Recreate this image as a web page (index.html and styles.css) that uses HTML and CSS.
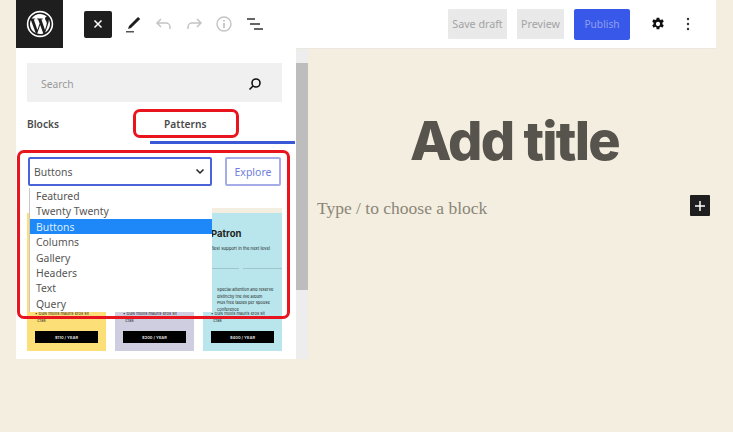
FILE: index.html
```html
<!DOCTYPE html>
<html lang="en">
<head>
<meta charset="utf-8">
<title>Add title</title>
<link rel="stylesheet" href="styles.css">
</head>
<body>
<div class="app">
  <header class="topbar">
    <div class="logo">
      <svg width="30" height="30" viewBox="0 0 30 30"><circle cx="15" cy="15" r="12.400" fill="none" stroke="#fff" stroke-width="1.600"/><path fill="#fff" d="M5 15c0 4 2.300 7.400 5.700 9L5.900 11c-.6 1.200-.9 2.600-.9 4zm16.800-.5c0-1.200-.5-2.100-.8-2.700-.5-.8-1-1.500-1-2.300 0-.9.700-1.800 1.700-1.800h.1C20 6 17.600 5 15 5c-3.500 0-6.600 1.800-8.400 4.500h.6c1 0 2.700-.1 2.700-.1.500 0 .6.800 0 .9 0 0-.5.100-1.100.1l3.600 10.700 2.200-6.500-1.500-4.200c-.5 0-1-.1-1-.1-.5 0-.5-.9.100-.9 0 0 1.600.1 2.600.1s2.700-.1 2.700-.1c.5 0 .6.800 0 .9 0 0-.5.100-1.100.1l3.600 10.600 1-3.300c.4-1.400.7-2.400.7-3.300zM15.200 16l-3 8.600c.9.300 1.800.4 2.800.4 1.200 0 2.300-.2 3.300-.6l-.1-.1zm8.500-5.600c0 .3.100.7.100 1 0 1-.2 2.100-.7 3.500l-3 8.700c2.900-1.700 4.900-4.900 4.900-8.600 0-1.700-.5-3.300-1.300-4.600z"/></svg>
    </div>
    <div class="tools">
      <button class="close" aria-label="Close"><svg width="10" height="10" viewBox="0 0 10 10"><path d="M1.500 1.500l7 7m0-7l-7 7" stroke="#fff" stroke-width="1.500"/></svg></button>
      <svg class="ic pen" width="18" height="20" viewBox="0 0 18 20"><path d="M5 12L14 3l2.200 2L7 14l-3 1z" fill="#1e1e1e"/><rect x="2" y="17" width="8" height="1.500" fill="#555"/></svg>
      <svg class="ic undo" width="18" height="14" viewBox="0 0 18 14"><path d="M6 2L2 6l4 4M2 6h9a4 4 0 0 1 4 4v2" fill="none" stroke="#c4c4c4" stroke-width="1.500"/></svg>
      <svg class="ic redo" width="18" height="14" viewBox="0 0 18 14"><path d="M12 2l4 4-4 4M16 6H7a4 4 0 0 0-4 4v2" fill="none" stroke="#c4c4c4" stroke-width="1.500"/></svg>
      <svg class="ic info" width="18" height="18" viewBox="0 0 18 18"><circle cx="9" cy="9" r="7" fill="none" stroke="#c4c4c4" stroke-width="1.400"/><path d="M9 8v5M9 5v1.500" stroke="#b4b4b4" stroke-width="1.400"/></svg>
      <svg class="ic list" width="18" height="14" viewBox="0 0 18 14"><path d="M1 2h8M4 7h10M8 12h9" stroke="#333" stroke-width="1.600"/></svg>
    </div>
    <div class="actions">
      <button class="ghost draft">Save draft</button>
      <button class="ghost preview">Preview</button>
      <button class="publish">Publish</button>
      <svg class="gear" width="16" height="16" viewBox="0 0 18 18"><path fill="#111" fill-rule="evenodd" d="M7.500 2h3l.4 2 1.300.6 1.800-1 1.500 2.600-1.500 1.300v1.700l1.500 1.300-1.500 2.600-1.800-1-1.300.6-.4 2.300h-3l-.4-2.300-1.300-.6-1.800 1-1.500-2.600 1.500-1.300V7.500L2.500 6.200 4 3.600l1.800 1 1.300-.6zM9 6.600a2.400 2.400 0 1 0 0 4.800 2.400 2.400 0 0 0 0-4.800z"/></svg>
      <svg class="dots" width="4" height="14" viewBox="0 0 4 14"><circle cx="2" cy="2" r="1.200" fill="#333"/><circle cx="2" cy="7" r="1.200" fill="#333"/><circle cx="2" cy="12" r="1.200" fill="#333"/></svg>
    </div>
  </header>
  <div class="main">
    <aside class="sidebar">
      <div class="search">
        <span>Search</span>
        <svg width="14" height="14" viewBox="0 0 14 14"><circle cx="8" cy="6" r="4" fill="none" stroke="#111" stroke-width="1.600"/><path d="M5 9l-3.500 3.500" stroke="#111" stroke-width="1.600"/></svg>
      </div>
      <div class="tabs">
        <span class="tab">Blocks</span>
        <span class="tab patterns">Patterns</span>
      </div>
      <div class="controls">
        <div class="select">Buttons<svg width="10" height="7" viewBox="0 0 10 7"><path d="M1.500 1.500L5 5l3.500-3.500" fill="none" stroke="#222" stroke-width="1.500"/></svg></div>
        <div class="explore">Explore</div>
      </div>
      <div class="cards">
        <div class="card yellow"><div class="card-body"></div><p class="fine">&bull; Duis mollis mauris eros sit<br>&nbsp;&nbsp;cras</p><div class="price">$110 / YEAR</div></div>
        <div class="card lilac"><div class="card-body"></div><p class="fine">&bull; Duis mollis mauris eros sit<br>&nbsp;&nbsp;cras</p><div class="price">$200 / YEAR</div></div>
        <div class="card cyan">
          <div class="card-body">
            <h4>Patron</h4>
            <p class="tag">Best support in the next level</p>
            <div class="rule"></div>
            <ul>
              <li>Special attention and reserve<br>distinctly the live album</li>
              <li>Plus free tables per spouse<br>conference</li>
            </ul>
          </div>
          <p class="fine">&bull; Duis mollis mauris eros sit<br>&nbsp;&nbsp;cras</p>
          <div class="price">$400 / YEAR</div>
        </div>
      </div>
      <ul class="dropdown">
        <li>Featured</li>
        <li>Twenty Twenty</li>
        <li class="active">Buttons</li>
        <li>Columns</li>
        <li>Gallery</li>
        <li>Headers</li>
        <li>Text</li>
        <li>Query</li>
      </ul>
      <div class="mark mark-tab"></div>
      <div class="mark mark-panel"></div>
    </aside>
    <div class="scrollbar"><div class="thumb"></div></div>
    <section class="editor">
      <h1>Add title</h1>
      <div class="para">
        <span>Type / to choose a block</span>
        <button class="add" aria-label="Add block"><svg width="10" height="10" viewBox="0 0 10 10"><path d="M5 0v10M0 5h10" stroke="#fff" stroke-width="1.500"/></svg></button>
      </div>
    </section>
  </div>
</div>
</body>
</html>
```
FILE: styles.css
```css
* { box-sizing: border-box; }
html, body { margin: 0; height: 100%; }
body {
  background: #f4eee0;
  font-family: "Noto Sans", "Open Sans", sans-serif;
  overflow: hidden;
}
button { font-family: inherit; border: 0; padding: 0; }
.app { width: 700px; margin-left: 16px; }

.topbar { height: 48px; background: #fff; display: flex; align-items: center; box-shadow: 0 1px 0 #ece8df; position: relative; }
.logo { width: 47px; height: 48px; background: #1e1e1e; display: flex; align-items: center; justify-content: center; }
.tools { display: flex; align-items: center; margin-left: 21px; }
.close { width: 28px; height: 27px; background: #1e1e1e; border-radius: 2px; display: flex; align-items: center; justify-content: center; }
.ic { display: block; }
.pen { margin-left: 12px; }
.undo { margin-left: 13px; }
.redo { margin-left: 12px; }
.info { margin-left: 12px; }
.list { margin-left: 13px; }
.actions { margin-left: auto; display: flex; align-items: center; }
.ghost { height: 30px; background: #e9e9e9; color: #a3a3a3; font-size: 10.700px; border-radius: 1px; }
.draft { width: 59px; }
.preview { width: 47px; margin-left: 10px; }
.publish { width: 56px; height: 31px; margin-left: 10px; background: #3858e9; color: #8f9ff0; font-size: 10.200px; border-radius: 2px; }
.gear { margin-left: 20px; }
.dots { margin-left: 20px; margin-right: 26px; }

.main { display: flex; align-items: flex-start; }
.sidebar { width: 280px; height: 311px; background: #fff; padding: 15px 14px 0 11px; position: relative; }
.search { height: 39px; background: #f0f0f0; display: flex; align-items: center; justify-content: space-between; padding: 2px 20px 0 14px; color: #9a9a9a; font-size: 10.300px; }
.tabs { height: 44px; display: flex; align-items: center; position: relative; font-size: 10.200px; font-weight: 600; color: #4a4a4a; }
.tabs::after { content: ""; position: absolute; left: 123px; right: -13px; bottom: 2px; height: 3px; background: #3858d8; }
.patterns { margin-left: 105px; }
.controls { display: flex; justify-content: space-between; padding: 0 1px; margin-top: 11px; }
.select { width: 184px; height: 29px; border: 2px solid #4a63d8; border-radius: 2px; display: flex; align-items: center; justify-content: space-between; padding: 0 5px 0 4px; font-size: 10.400px; color: #555; }
.explore { width: 56px; height: 29px; border: 2px solid #a5ace8; border-radius: 2px; display: flex; align-items: center; justify-content: center; color: #6f80dc; font-size: 10.500px; }
.cards { display: flex; gap: 9px; margin-top: 27px; }
.card { width: 79px; height: 138px; display: flex; flex-direction: column; align-items: stretch; padding: 0 8px 8px; overflow: hidden; font-family: "Inter", sans-serif; color: #222; }
.yellow { background: #fddf78; }
.lilac { background: #cfcde0; }
.cyan { background: #b8e6ec; box-shadow: 0 -5px 0 #f4eee0; overflow: visible; }
.card-body { flex: 1; min-height: 0; }
.card h4 { margin: 15px 0 0; font-size: 9.500px; line-height: 12px; font-weight: 700; color: #222; white-space: nowrap; }
.tag { margin: 6px 0 0 0; font-size: 4.300px; line-height: 5px; white-space: nowrap; }
.rule { height: 1px; margin: 17px -8px 0; background: linear-gradient(90deg, #9cc6cc 0 46%, transparent 46% 50%, #9cc6cc 50% 100%); }
.card ul { margin: 18px 0 0; padding: 0 0 0 6px; font-size: 4.100px; line-height: 6.500px; list-style: disc; white-space: nowrap; }
.fine { margin: 0 0 7px; font-size: 4.100px; line-height: 6.500px; white-space: nowrap; overflow: hidden; }
.price { height: 12px; flex: none; background: #000; color: #ddd; font-size: 4px; font-weight: 700; display: flex; align-items: center; justify-content: center; }

.dropdown { position: absolute; left: 13px; top: 140px; width: 183px; height: 124px; margin: 0; padding: 0; list-style: none; background: #fff; border-left: 1px solid #c8c8c8; font-size: 10.400px; line-height: 14.400px; color: #555; }
.dropdown li { padding: 1px 0 0 6px; height: 15.400px; white-space: nowrap; }
.dropdown .active { background: #1e88f8; color: #dcecff; }

.mark { position: absolute; border: 3px solid #e8141e; border-radius: 7px; pointer-events: none; }
.mark-tab { left: 117px; top: 61px; width: 106px; height: 29px; }
.mark-panel { left: 1px; top: 102px; width: 273px; height: 169px; }

.scrollbar { width: 12px; height: 311px; background: #ededed; padding-top: 15px; }
.thumb { height: 227px; background: #bdbdbd; }

.editor { flex: 1; min-width: 0; padding: 0 0 0 9px; }
.editor h1 { margin: 60px 4px 0 0; text-align: center; font-family: "Inter", sans-serif; font-size: 54px; line-height: 66px; font-weight: 800; letter-spacing: -1.800px; color: #57544e; }
.para { display: flex; align-items: center; justify-content: space-between; margin-top: 21px; padding-right: 6px; font-family: "Liberation Serif", serif; font-size: 17.500px; color: #8a8678; height: 21px; }
.para span { padding-top: 5px; }
.add { width: 20px; height: 21px; background: #1e1e1e; border-radius: 1px; display: flex; align-items: center; justify-content: center; }
```
